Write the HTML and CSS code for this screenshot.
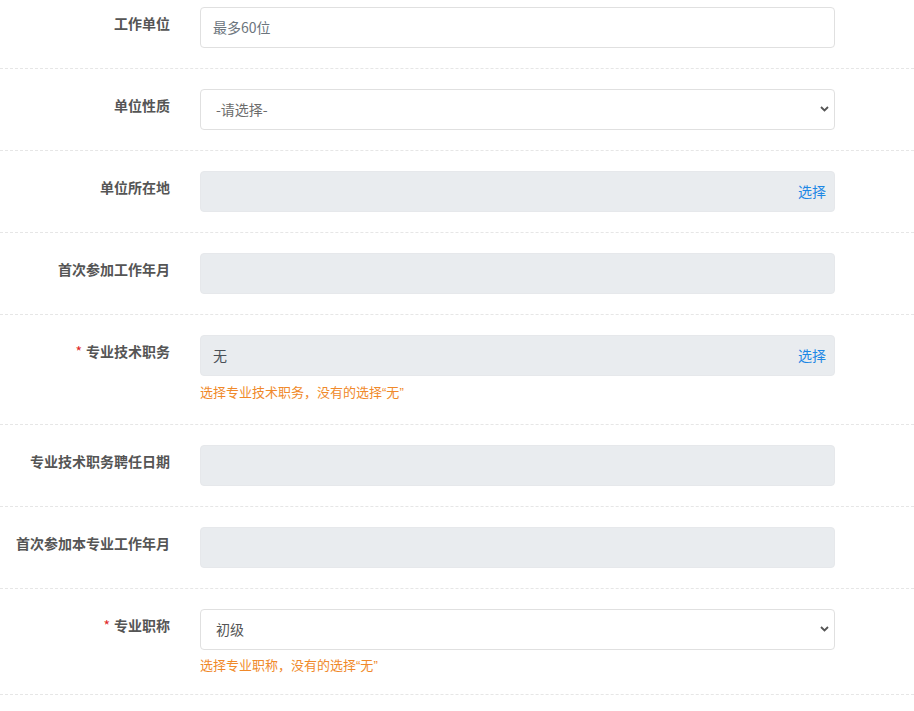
FILE: index.html
```html
<!DOCTYPE html>
<html lang="zh-CN">
<head>
<meta charset="utf-8">
<title>表单</title>
<link rel="stylesheet" href="styles.css">
</head>
<body>
<form class="form">
  <div class="row">
    <label class="label">工作单位</label>
    <div class="field">
      <input class="control" type="text" placeholder="最多60位">
    </div>
  </div>
  <div class="row">
    <label class="label">单位性质</label>
    <div class="field">
      <div class="select-wrap">
        <select class="control select"><option>-请选择-</option></select>
        <svg class="chev" width="9" height="6" viewBox="0 0 9 6"><path d="M1 1 L4.5 4.5 L8 1" fill="none" stroke="#555" stroke-width="1.8"/></svg>
      </div>
    </div>
  </div>
  <div class="row">
    <label class="label">单位所在地</label>
    <div class="field">
      <div class="control disabled"><span class="value"></span><span class="pick">选择</span></div>
    </div>
  </div>
  <div class="row">
    <label class="label">首次参加工作年月</label>
    <div class="field">
      <div class="control disabled"></div>
    </div>
  </div>
  <div class="row">
    <label class="label"><span class="req">*</span>专业技术职务</label>
    <div class="field">
      <div class="control disabled"><span class="value">无</span><span class="pick">选择</span></div>
      <div class="hint hint-a">选择专业技术职务，没有的选择<span class="q">“</span>无<span class="q">”</span></div>
    </div>
  </div>
  <div class="row">
    <label class="label">专业技术职务聘任日期</label>
    <div class="field">
      <div class="control disabled"></div>
    </div>
  </div>
  <div class="row">
    <label class="label">首次参加本专业工作年月</label>
    <div class="field">
      <div class="control disabled"></div>
    </div>
  </div>
  <div class="row">
    <label class="label"><span class="req">*</span>专业职称</label>
    <div class="field">
      <div class="select-wrap">
        <select class="control select value-sel"><option>初级</option></select>
        <svg class="chev" width="9" height="6" viewBox="0 0 9 6"><path d="M1 1 L4.5 4.5 L8 1" fill="none" stroke="#555" stroke-width="1.8"/></svg>
      </div>
      <div class="hint hint-b">选择专业职称，没有的选择<span class="q">“</span>无<span class="q">”</span></div>
    </div>
  </div>
</form>
</body>
</html>
```

FILE: styles.css
```css
* { box-sizing: border-box; }
html, body {
  margin: 0;
  padding: 0;
  background: #fff;
  font-family: "Noto Sans CJK SC", "Microsoft YaHei", sans-serif;
  font-size: 14px;
  color: #495057;
  overflow: hidden;
}
.form {
  margin-top: -13px;
}
.row {
  display: flex;
  gap: 30px;
  padding: 20px 0;
  border-bottom: 1px dashed #e6e6e6;
}
.label {
  flex: 0 0 170px;
  text-align: right;
  font-weight: bold;
  font-size: 14px;
  color: #555;
  padding-top: 6px;
  line-height: 21px;
  white-space: nowrap;
}
.req {
  color: #e02828;
  font-weight: normal;
  margin-right: 4px;
}
.field {
  flex: 0 0 635px;
  display: flex;
  flex-direction: column;
}
.control {
  display: flex;
  align-items: center;
  justify-content: space-between;
  width: 635px;
  height: 41px;
  border: 1px solid #e0e0e0;
  border-radius: 4px;
  padding: 0 8px 2px 12px;
  font-family: inherit;
  font-size: 14px;
  color: #495057;
  background: #fff;
  outline: none;
}
.control::placeholder { color: #6c757d; }
.disabled {
  background: #e9ecef;
  border-color: #e6e8eb;
}
.pick {
  color: #1e88e5;
}
.select-wrap { position: relative; }
.select {
  appearance: none;
  -webkit-appearance: none;
  padding-left: 15px;
  color: #6c6c6c;
}
.value-sel { color: #555; }
.chev {
  position: absolute;
  right: 6px;
  top: 17px;
  pointer-events: none;
}
.hint {
  color: #f0892a;
  font-size: 13px;
  line-height: 20px;
}
.q { font-family: "Liberation Sans", sans-serif; }
.hint-a { margin-top: 6px; padding-bottom: 1px; }
.hint-b { margin-top: 5px; margin-bottom: -2px; }
```
